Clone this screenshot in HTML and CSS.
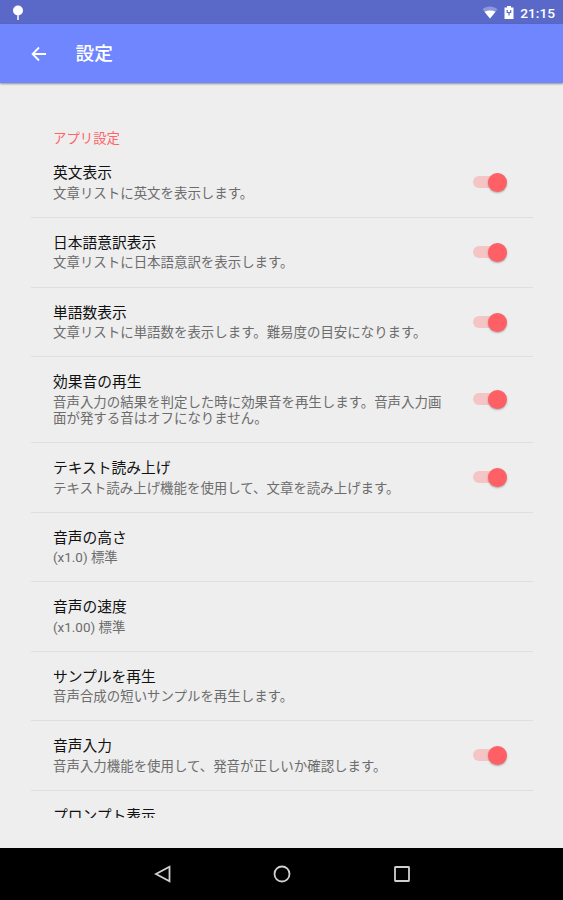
FILE: index.html
```html
<!DOCTYPE html>
<html lang="ja">
<head>
  <meta charset="UTF-8" />
  <meta name="viewport" content="width=device-width, initial-scale=1.0"/>
  <title>設定</title>
  <link rel="stylesheet" href="styles.css">
</head>
<body>
  <div class="screen">

    <!-- Status bar -->
    <div class="status-bar">
      <svg class="status-notice" width="12" height="16" viewBox="0 0 12 16">
        <circle cx="6" cy="5.5" r="5" fill="#fff"/>
        <path d="M5 10h2v5H5z" fill="#d5d9f5"/>
      </svg>
      <div class="status-icons">
        <svg width="16" height="13" viewBox="0 0 16 13">
          <path d="M0.5 3.2C5 -.4 11 -.4 15.500 3.200L8 12.500z" fill="#8d98dc"/>
          <path d="M2.500 5.800C6 4 10 4 13.500 5.800L8 12.500z" fill="#fff"/>
        </svg>
        <svg width="10" height="13" viewBox="0 0 10 13">
          <path d="M3 0h4v1.500h2.500V13H.5V1.500H3z" fill="#fff"/>
          <path d="M3.200 4v2.500h3.500V4M5 6.500V9.500" stroke="#5c6bc8" stroke-width="1.200" fill="none"/>
        </svg>
        <span class="clock">21:15</span>
      </div>
    </div>

    <!-- Toolbar -->
    <header class="toolbar">
      <svg width="16" height="16" viewBox="0 0 16 16">
        <path d="M15 8H2M8 1.500L1.600 8L8 14.500" stroke="#fff" stroke-width="1.800" fill="none"/>
      </svg>
      <h1>設定</h1>
    </header>

    <main class="content">
      <div class="settings-list">
        <h2>アプリ設定</h2>
        <div class="setting">
          <div class="setting-text">
            <h3>英文表示</h3>
            <p>文章リストに英文を表示します。</p>
          </div>
          <div class="switch"></div>
        </div>
        <div class="setting">
          <div class="setting-text">
            <h3>日本語意訳表示</h3>
            <p>文章リストに日本語意訳を表示します。</p>
          </div>
          <div class="switch"></div>
        </div>
        <div class="setting">
          <div class="setting-text">
            <h3>単語数表示</h3>
            <p>文章リストに単語数を表示します。難易度の目安になります。</p>
          </div>
          <div class="switch"></div>
        </div>
        <div class="setting">
          <div class="setting-text">
            <h3>効果音の再生</h3>
            <p>音声入力の結果を判定した時に効果音を再生します。音声入力画<br>面が発する音はオフになりません。</p>
          </div>
          <div class="switch"></div>
        </div>
        <div class="setting">
          <div class="setting-text">
            <h3>テキスト読み上げ</h3>
            <p>テキスト読み上げ機能を使用して、文章を読み上げます。</p>
          </div>
          <div class="switch"></div>
        </div>
        <div class="setting">
          <div class="setting-text">
            <h3>音声の高さ</h3>
            <p>(x1.0) 標準</p>
          </div>
        </div>
        <div class="setting">
          <div class="setting-text">
            <h3>音声の速度</h3>
            <p>(x1.00) 標準</p>
          </div>
        </div>
        <div class="setting">
          <div class="setting-text">
            <h3>サンプルを再生</h3>
            <p>音声合成の短いサンプルを再生します。</p>
          </div>
        </div>
        <div class="setting">
          <div class="setting-text">
            <h3>音声入力</h3>
            <p>音声入力機能を使用して、発音が正しいか確認します。</p>
          </div>
          <div class="switch"></div>
        </div>
        <div class="setting setting-last">
          <div class="setting-text">
            <h3>プロンプト表示</h3>
          </div>
        </div>
      </div>
    </main>

    <!-- Navigation bar -->
    <nav class="nav-bar">
      <svg width="18" height="18" viewBox="0 0 18 18">
        <path d="M16.500 1.800V16.200L3 9z"/>
      </svg>
      <svg width="18" height="18" viewBox="0 0 18 18">
        <circle cx="9" cy="9" r="7.500"/>
      </svg>
      <svg width="18" height="18" viewBox="0 0 18 18">
        <rect x="2" y="2" width="14" height="14" rx="0.500"/>
      </svg>
    </nav>
  </div>
</body>
</html>
```
FILE: styles.css
```css
* {
  box-sizing: border-box;
}

body {
  font-family: Roboto, 'Noto Sans CJK JP', sans-serif;
  background-color: #eee;
  margin: 0;
  overflow: hidden;
}

h1, h2, h3, p {
  margin: 0;
  white-space: nowrap;
}

.screen {
  display: flex;
  flex-direction: column;
  height: 900px;
}

.status-bar {
  display: flex;
  justify-content: space-between;
  align-items: center;
  height: 24px;
  padding: 1px 8px 0 12px;
  background-color: #5a69c8;
  flex-shrink: 0;
}

.status-icons {
  display: flex;
  align-items: center;
  gap: 6px;
}

.clock {
  font-size: 13.7px;
  font-weight: 500;
  line-height: 16px;
  color: #fff;
}

.toolbar {
  display: flex;
  align-items: center;
  gap: 28.5px;
  height: 59px;
  padding-left: 31px;
  background-color: #7086ff;
  box-shadow: 0 1px 2px rgba(0, 0, 0, 0.4);
  flex-shrink: 0;
}

.toolbar h1 {
  font-size: 18.7px;
  font-weight: 500;
  line-height: 24px;
  color: #fff;
}

.content {
  flex: 1;
  min-height: 0;
  padding: 38px 30px 30px 31px;
}

.settings-list {
  height: 100%;
  overflow: hidden;
}

.settings-list h2 {
  height: 27.4px;
  padding: 8px 0 0 22px;
  font-size: 13.4px;
  font-weight: 400;
  line-height: 20px;
  color: #ff6468;
}

.setting {
  display: flex;
  justify-content: space-between;
  align-items: center;
  min-height: 69.6px;
  padding: 15px 26px 14.7px 22px;
  border-bottom: 1px solid #dfdfdf;
}

.setting-last {
  align-items: flex-start;
}

.setting h3 {
  font-size: 14.75px;
  font-weight: 400;
  line-height: 20px;
  color: #111;
}

.setting p {
  margin-top: 2.4px;
  font-size: 13.45px;
  line-height: 16.4px;
  color: #6c6c6c;
}

.switch {
  position: relative;
  width: 34px;
  height: 19px;
  flex-shrink: 0;
}

.switch::before {
  content: '';
  position: absolute;
  left: 0;
  top: 3px;
  width: 30px;
  height: 12px;
  border-radius: 6px;
  background-color: #f5c5c6;
}

.switch::after {
  content: '';
  position: absolute;
  right: 0;
  top: 0;
  width: 19px;
  height: 19px;
  border-radius: 50%;
  background-color: #ff6065;
  box-shadow: 0 1px 2px rgba(0, 0, 0, 0.3);
}

.nav-bar {
  display: flex;
  justify-content: center;
  align-items: center;
  gap: 102px;
  height: 52px;
  background-color: #000;
  flex-shrink: 0;
}

.nav-bar svg {
  fill: none;
  stroke: #d0d0d0;
  stroke-width: 1.8;
}
```
